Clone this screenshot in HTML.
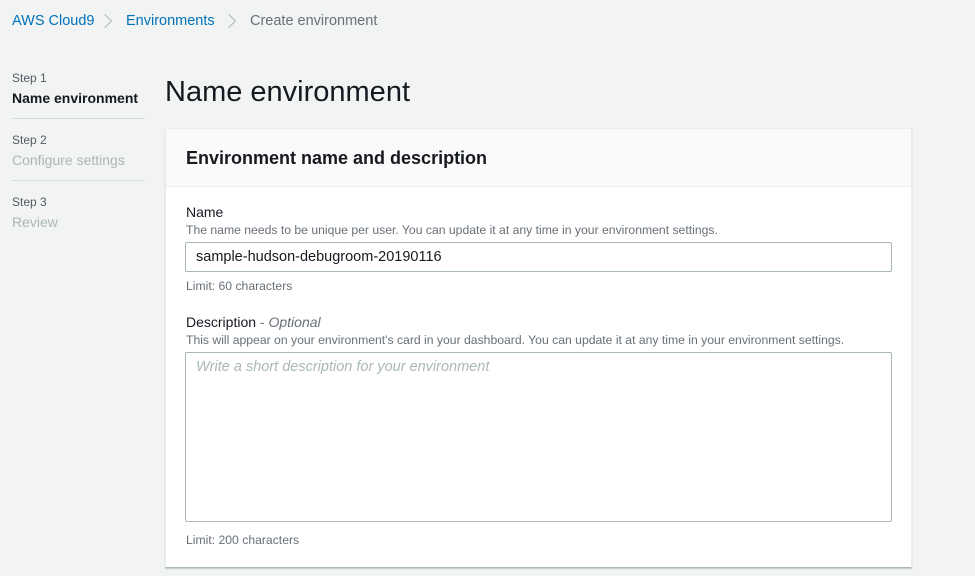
<!DOCTYPE html>
<html><head><style>
body{margin:0;width:975px;height:576px;background:#f2f3f3;font-family:"Liberation Sans",sans-serif;position:relative;overflow:hidden;color:#16191f}
.a{position:absolute;white-space:nowrap}
.bc{top:13px;font-size:14.5px}
.blue{color:#0073bb}
.grey{color:#687078}
.sep{position:absolute;top:16px;width:9px;height:9px;border-top:1.5px solid #aab7b8;border-right:1.5px solid #aab7b8;transform:rotate(45deg)}
.st{font-size:12px;color:#545b64;left:12px}
.sn{font-size:14px;left:12px}
.hr{position:absolute;left:12px;width:133px;height:1px;background:#d5dbdb}
.card{position:absolute;left:165px;top:128px;width:745px;height:438px;background:#fff;border:1px solid #eaeded;border-bottom:1px solid #aab7b8;box-shadow:0 1px 1px rgba(0,28,36,.2)}
.head{position:absolute;left:0;top:0;width:745px;height:57px;background:#fafafa;border-bottom:1px solid #eaeded}
.box{position:absolute;background:#fff;border:1px solid #aab7b8;border-radius:2px;box-sizing:border-box}
.sm{font-size:12.2px;color:#687078}
</style></head><body>
<div class="a bc blue" style="left:12px">AWS Cloud9</div>
<div class="sep" style="left:100px"></div>
<div class="a bc blue" style="left:126px">Environments</div>
<div class="sep" style="left:224px"></div>
<div class="a bc grey" style="left:250px">Create environment</div>

<div class="a st" style="top:71px">Step 1</div>
<div class="a sn" style="top:90px;font-weight:bold;color:#16191f">Name environment</div>
<div class="hr" style="top:118px"></div>
<div class="a st" style="top:133px">Step 2</div>
<div class="a sn" style="top:152px;color:#aab7b8">Configure settings</div>
<div class="hr" style="top:180px"></div>
<div class="a st" style="top:195px">Step 3</div>
<div class="a sn" style="top:214px;color:#aab7b8">Review</div>

<div class="a" style="left:165px;top:76px;font-size:29px">Name environment</div>

<div class="card"><div class="head"></div>
<div class="a" style="left:20px;top:19px;font-size:18px;font-weight:bold">Environment name and description</div>
<div class="a" style="left:20px;top:75px;font-size:14px">Name</div>
<div class="a sm" style="left:20px;top:94px">The name needs to be unique per user. You can update it at any time in your environment settings.</div>
<div class="box" style="left:19px;top:113px;width:707px;height:30px"><span class="a" style="left:10px;top:6px;font-size:14.5px">sample-hudson-debugroom-20190116</span></div>
<div class="a sm" style="left:20px;top:150px">Limit: 60 characters</div>
<div class="a" style="left:20px;top:185px;font-size:14px">Description <span style="color:#687078">- <i>Optional</i></span></div>
<div class="a sm" style="left:20px;top:204px">This will appear on your environment's card in your dashboard. You can update it at any time in your environment settings.</div>
<div class="box" style="left:19px;top:223px;width:707px;height:170px"><span class="a" style="left:10px;top:6px;font-size:14.5px;font-style:italic;color:#aab7b8">Write a short description for your environment</span></div>
<div class="a sm" style="left:20px;top:404px">Limit: 200 characters</div>
</div>
</body></html>
